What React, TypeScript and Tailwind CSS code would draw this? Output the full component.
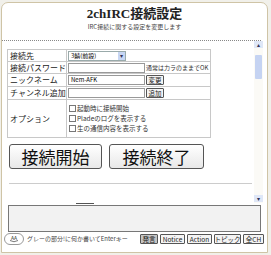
import React from 'react';

const jp = { fontFamily: '"MS UI Gothic", "Noto Sans CJK JP", sans-serif' };

const Row: React.FC<{ label: string; h: string; children?: React.ReactNode }> = ({ label, h, children }) => (
  <div className={`flex border-b border-[#c8c8c8] ${h}`}>
    <div className="w-[59px] shrink-0 border-r border-[#c8c8c8] pl-[2px] flex items-center text-[8px] text-[#222] leading-none whitespace-nowrap overflow-hidden">
      {label}
    </div>
    <div className="flex-1 flex items-center pl-[1px] gap-[1px]">{children}</div>
  </div>
);

const Check: React.FC<{ label: string }> = ({ label }) => (
  <div className="flex items-center gap-[1px] h-[10px] text-[6.5px] text-[#333] leading-none whitespace-nowrap">
    <span className="w-[7px] h-[7px] border border-[#777] bg-white" />
    <span>{label}</span>
  </div>
);

const SmallBtn: React.FC<{ label: string; w: string; active?: boolean }> = ({ label, w, active }) => (
  <button
    className={`${w} h-[10px] border border-[#555] rounded-[1px] text-[6.5px] leading-none text-[#222] whitespace-nowrap flex items-center justify-center ${
      active ? 'bg-[#c4c4c4]' : 'bg-[#f4f4f4]'
    }`}
  >
    {label}
  </button>
);

export default function App() {
  return (
    <div className="w-[271px] h-[255px] bg-[#f1f0ea] pt-[2px] pl-[1px]" style={jp}>
      <div className="w-[267px] h-[251px] bg-white border border-[#cfc4a6] rounded-t-[7px] flex flex-col">
        <div className="h-[37px] flex flex-col items-center pt-[4px]">
          <div
            className="text-[13px] font-bold text-[#222] leading-none"
            style={{ fontFamily: '"Liberation Serif", "Noto Sans CJK JP", serif' }}
          >
            2chIRC接続設定
          </div>
          <div className="text-[6px] text-[#444] mt-[4px] leading-none whitespace-nowrap">IRC接続に関する設定を変更します</div>
        </div>
        <div className="border-t border-dotted border-[#888] mr-[6px]" />
        <div className="flex h-[162px]">
          <div className="flex-1 pl-[5px] pt-[8px]">
            <div className="w-[204px] border-t border-l border-r border-[#c8c8c8]">
              <Row label="接続先" h="h-[12px]">
                <div className="w-[58px] h-[10px] border border-[#9aa] flex items-center justify-between text-[6px] pl-[2px] whitespace-nowrap">
                  <span>3鯖(前設)</span>
                  <span className="w-[7px] h-[8px] bg-[#c7d6f4] text-[#335] text-[6px] flex items-center justify-center">▾</span>
                </div>
              </Row>
              <Row label="接続パスワード" h="h-[12px]">
                <div className="w-[77px] h-[10px] border border-[#999]" />
                <span className="text-[6px] text-[#333] leading-none whitespace-nowrap">通常は力ラのままでOK</span>
              </Row>
              <Row label="ニックネーム" h="h-[13px]">
                <div className="w-[77px] h-[10px] border border-[#999] text-[6px] leading-[8px] pl-[2px]">Nem-AFK</div>
                <SmallBtn label="変更" w="w-[18px]" />
              </Row>
              <Row label="チャンネル追加" h="h-[13px]">
                <div className="w-[77px] h-[10px] border border-[#999]" />
                <SmallBtn label="追加" w="w-[18px]" />
              </Row>
              <div className="flex border-b border-[#c8c8c8] h-[38px]">
                <div className="w-[59px] shrink-0 border-r border-[#c8c8c8] pl-[2px] flex items-center text-[8px] text-[#222] leading-none">
                  オプション
                </div>
                <div className="flex-1 flex flex-col justify-center pl-[2px]">
                  <Check label="起動時に接続開始" />
                  <Check label="Pladeのログを表示する" />
                  <Check label="生の通信内容を表示する" />
                </div>
              </div>
            </div>
            <div className="flex gap-[7px] mt-[6px] pl-[2px]">
              <button className="w-[93px] h-[25px] border border-[#555] rounded-[3px] bg-gradient-to-b from-white to-[#e8e8e8] text-[17px] leading-none text-[#111]">
                接続開始
              </button>
              <button className="w-[95px] h-[25px] border border-[#555] rounded-[3px] bg-gradient-to-b from-white to-[#e8e8e8] text-[17px] leading-none text-[#111]">
                接続終了
              </button>
            </div>
            <div className="border-t border-[#ccc] mt-[14px] w-[243px] ml-[2px]" />
          </div>
          <div className="w-[9px] mr-[4px] flex flex-col justify-between bg-[#fbfaf6]">
            <div>
              <div className="h-[7px] bg-[#dfe7f7] text-[6px] text-[#335] leading-[7px] text-center">▴</div>
              <div className="h-[24px] mt-[7px] mx-[1px] bg-[#c5d3f2] rounded-[1px]" />
            </div>
            <div className="h-[7px] bg-[#dfe7f7] text-[6px] text-[#335] leading-[7px] text-center mb-[1px]">▾</div>
          </div>
        </div>
        <div className="h-[2px] relative">
          <div className="absolute left-[74px] top-0 w-[18px] h-[1px] bg-[#555]" />
        </div>
        <div className="mx-[6px] h-[27px] border border-[#777] bg-[#f2f2f2]" />
        <div className="flex items-center h-[14px] pl-[2px] pr-[3px]">
          <div className="w-[20px] h-[12px] border border-[#999] rounded-[6px] flex flex-col items-center justify-center text-[#333]">
            <span className="text-[5px] leading-[5px]">AA</span>
            <svg width="10" height="3" viewBox="0 0 10 3">
              <path d="M1 0.5 Q5 3 9 0.5" fill="none" stroke="#555" strokeWidth="0.8" />
            </svg>
          </div>
          <span className="ml-[3px] text-[6px] text-[#444] leading-none whitespace-nowrap">グレーの部分!に何か書いてEnterキー</span>
          <div className="ml-auto flex gap-[2px]">
            <SmallBtn label="発言" w="w-[18px]" active />
            <SmallBtn label="Notice" w="w-[25px]" />
            <SmallBtn label="Action" w="w-[25px]" />
            <SmallBtn label="トピック" w="w-[27px]" />
            <SmallBtn label="全CH" w="w-[21px]" />
          </div>
        </div>
      </div>
    </div>
  );
}
